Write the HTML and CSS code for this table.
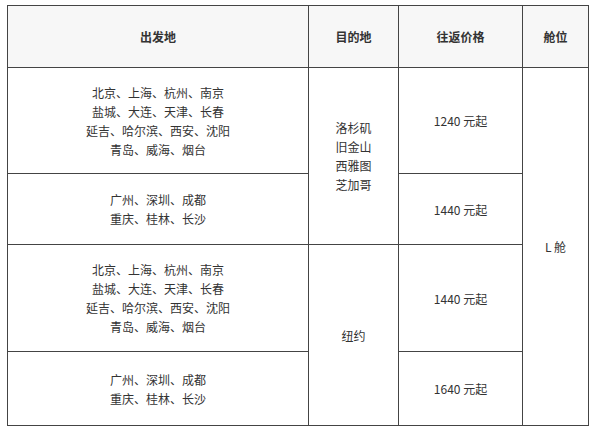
FILE: index.html
```html
<!DOCTYPE html>
<html lang="zh">
<head>
<meta charset="utf-8">
<link rel="stylesheet" href="styles.css">
</head>
<body>
<table class="fare">
  <colgroup>
    <col class="c-from">
    <col class="c-to">
    <col class="c-price">
    <col class="c-cabin">
  </colgroup>
  <thead>
    <tr class="head">
      <th>出发地</th>
      <th>目的地</th>
      <th>往返价格</th>
      <th>舱位</th>
    </tr>
  </thead>
  <tbody>
    <tr class="r1">
      <td>北京、上海、杭州、南京<br>盐城、大连、天津、长春<br>延吉、哈尔滨、西安、沈阳<br>青岛、威海、烟台</td>
      <td rowspan="2">洛杉矶<br>旧金山<br>西雅图<br>芝加哥</td>
      <td>1240 元起</td>
      <td rowspan="4">L 舱</td>
    </tr>
    <tr class="r2">
      <td>广州、深圳、成都<br>重庆、桂林、长沙</td>
      <td>1440 元起</td>
    </tr>
    <tr class="r3">
      <td>北京、上海、杭州、南京<br>盐城、大连、天津、长春<br>延吉、哈尔滨、西安、沈阳<br>青岛、威海、烟台</td>
      <td rowspan="2">纽约</td>
      <td>1440 元起</td>
    </tr>
    <tr class="r4">
      <td>广州、深圳、成都<br>重庆、桂林、长沙</td>
      <td>1640 元起</td>
    </tr>
  </tbody>
</table>
</body>
</html>
```
FILE: styles.css
```css
html, body {
  margin: 0;
  padding: 0;
  background: #fff;
}
body {
  padding: 5px 0 0 7px;
  font-family: "Noto Sans CJK SC", "Liberation Sans", sans-serif;
  font-size: 12px;
  color: #333;
}
.fare {
  border-collapse: collapse;
  table-layout: fixed;
  width: 581px;
  border: 1px solid #333;
}
.c-from { width: 301px; }
.c-to { width: 90px; }
.c-price { width: 124px; }
.c-cabin { width: 66px; }
.fare th, .fare td {
  border: 1px solid #444;
  padding: 0;
  text-align: center;
  vertical-align: middle;
  line-height: 19px;
}
.fare th {
  background: #f7f7f7;
  font-weight: bold;
  color: #333;
}
.head { height: 62px; }
.r1 { height: 106px; }
.r2 { height: 71px; }
.r3 { height: 107px; }
.r4 { height: 74px; }
```
